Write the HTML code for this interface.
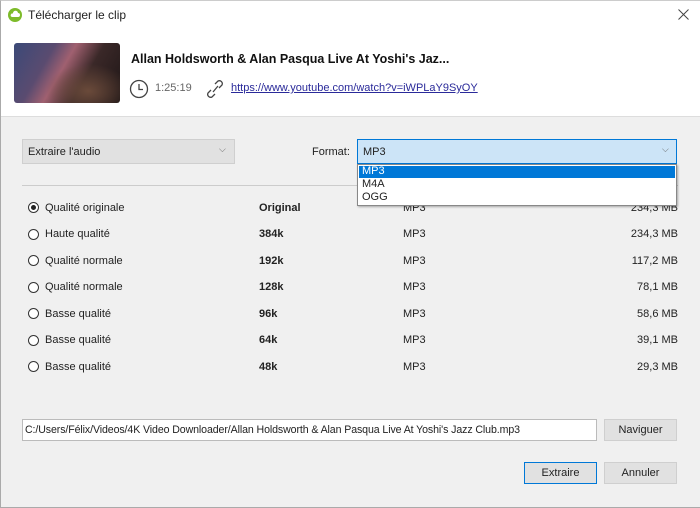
<html><head><style>
body{margin:0;width:700px;height:507px;background:#f0f0f0;font-family:"Liberation Sans",sans-serif;font-size:11px;color:#222;position:relative;overflow:hidden}
.a{position:absolute;white-space:nowrap}
.hdr{position:absolute;left:0;top:0;width:700px;height:116px;background:#fff;border-bottom:1px solid #ddd}
.btn{position:absolute;background:#e1e1e1;border:1px solid #cfcfcf;text-align:center;box-sizing:border-box}
.radio{position:absolute;width:11px;height:11px;border:1px solid #333;border-radius:50%;background:#fff;box-sizing:border-box}
</style></head><body>
<div class="hdr"></div>
<div style="position:absolute;left:0;top:0;width:699px;height:506px;border:1px solid #aaa;border-top:1px solid #ccc"></div>
<svg class="a" style="left:8px;top:8px" width="14" height="14"><circle cx="7" cy="7" r="7" fill="#7dbb2a"/><path d="M4 9h6a2 2 0 0 0 0-4 2.5 2.5 0 0 0-5 0.5A1.7 1.7 0 0 0 4 9z" fill="#fff"/></svg>
<div class="a" style="left:28px;top:8px;font-size:12px">Télécharger le clip</div>
<svg class="a" style="left:678px;top:9px" width="11" height="11"><path d="M0.5 0.5l10 10M10.5 0.5l-10 10" stroke="#444" stroke-width="1"/></svg>
<div class="a" style="left:14px;top:43px;width:106px;height:60px;border-radius:3px;background:radial-gradient(ellipse at 70% 80%,#6a4a3a 0%,transparent 40%),linear-gradient(120deg,#3b4a78 0%,#5a4b70 30%,#a06070 45%,#3a2828 65%,#1e1616 100%)"></div>
<div class="a" style="left:131px;top:52px;font-size:12.5px;font-weight:bold;color:#111">Allan Holdsworth &amp; Alan Pasqua Live At Yoshi's Jaz...</div>
<svg class="a" style="left:129px;top:79px" width="20" height="20"><circle cx="10" cy="10" r="8.5" fill="none" stroke="#444" stroke-width="1.3"/><path d="M10 5v5.5h4" fill="none" stroke="#444" stroke-width="1.3"/></svg>
<div class="a" style="left:155px;top:82px;color:#666">1:25:19</div>
<svg class="a" style="left:206px;top:79px" width="18" height="20"><path d="M9 5l3-3a3 3 0 0 1 4 4l-3 3M9 15l-3 3a3 3 0 0 1-4-4l3-3M7 13l5-6" fill="none" stroke="#444" stroke-width="1.3"/></svg>
<div class="a" style="left:231px;top:82px;color:#2a2a9a;text-decoration:underline">https://www.youtube.com/watch?v=iWPLaY9SyOY</div>

<div class="a" style="left:22px;top:139px;width:213px;height:25px;background:#e1e1e1;border:1px solid #cfcfcf;box-sizing:border-box"></div>
<div class="a" style="left:28px;top:146px">Extraire l'audio</div>
<div class="a" style="left:219px;top:144px;font-size:9px;color:#666">⌵</div>
<div class="a" style="left:312px;top:146px">Format:</div>
<div class="a" style="left:357px;top:139px;width:320px;height:25px;background:#cce4f7;border:1px solid #0078d7;box-sizing:border-box"></div>
<div class="a" style="left:363px;top:146px">MP3</div>
<div class="a" style="left:662px;top:144px;font-size:9px;color:#666">⌵</div>
<div class="a" style="left:22px;top:185px;width:656px;height:1px;background:#ccc"></div>

<div id="rows"></div>
<div class="a" style="left:357px;top:164px;width:320px;height:42px;background:#fff;border:1px solid #888;box-sizing:border-box;box-shadow:1px 1px 2px rgba(0,0,0,.3);z-index:5">
<div style="position:absolute;left:1px;top:1px;width:316px;height:12px;background:#0078d7"></div>
<div style="position:absolute;left:4px;top:0px;color:#fff">MP3</div>
<div style="position:absolute;left:4px;top:13px">M4A</div>
<div style="position:absolute;left:4px;top:26px">OGG</div>
</div>
<script>
var d=[["Qualité originale","Original","234,3 MB"],["Haute qualité","384k","234,3 MB"],["Qualité normale","192k","117,2 MB"],["Qualité normale","128k","78,1 MB"],["Basse qualité","96k","58,6 MB"],["Basse qualité","64k","39,1 MB"],["Basse qualité","48k","29,3 MB"]];
var h="";d.forEach(function(r,i){var y=201.5+i*26.5;
h+='<div class="radio" style="left:28px;top:'+(y+0.5)+'px">'+(i==0?'<div style="position:absolute;left:2px;top:2px;width:5px;height:5px;border-radius:50%;background:#222"></div>':'')+'</div>';
h+='<div class="a" style="left:45px;top:'+y+'px">'+r[0]+'</div><div class="a" style="left:259px;top:'+y+'px;font-weight:bold">'+r[1]+'</div><div class="a" style="left:403px;top:'+y+'px">MP3</div><div class="a" style="right:22px;top:'+y+'px">'+r[2]+'</div>';});
document.getElementById("rows").innerHTML=h;
</script>
<div class="a" style="left:22px;top:419px;width:575px;height:22px;background:#fff;border:1px solid #bbb;box-sizing:border-box"></div>
<div class="a" style="left:25px;top:424px;font-size:10.6px;letter-spacing:-0.1px">C:/Users/Félix/Videos/4K Video Downloader/Allan Holdsworth &amp; Alan Pasqua Live At Yoshi's Jazz Club.mp3</div>
<div class="btn" style="left:604px;top:419px;width:73px;height:22px;line-height:20px">Naviguer</div>
<div class="btn" style="left:524px;top:462px;width:73px;height:22px;line-height:20px;border-color:#0078d7">Extraire</div>
<div class="btn" style="left:604px;top:462px;width:73px;height:22px;line-height:20px">Annuler</div>
</body></html>
